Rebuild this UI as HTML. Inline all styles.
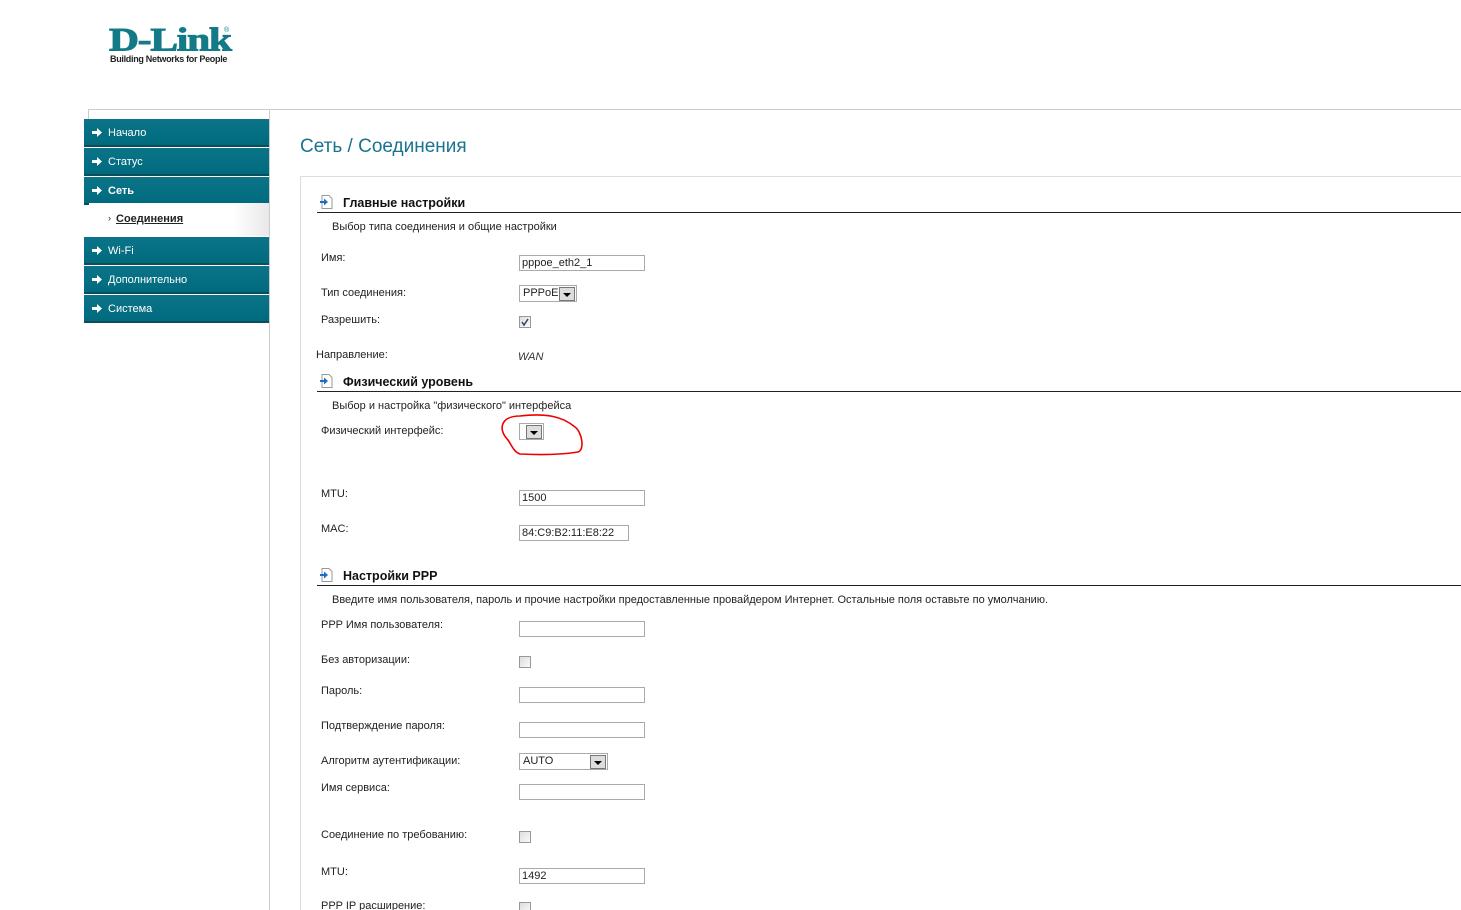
<!DOCTYPE html>
<html style="overflow:hidden"><head><meta charset="utf-8">
<style>
html,body{overflow:hidden}
body{margin:0;width:1461px;height:910px;background:#fff;font-family:"Liberation Sans","DejaVu Sans",sans-serif;font-size:11px;color:#222;position:relative}
.a{position:absolute;white-space:nowrap}
.logo{left:109px;top:25px;font-family:"Liberation Serif",serif;font-weight:bold;font-size:34px;color:#137a87;letter-spacing:-1px;line-height:34px;transform:scale(1.22,0.95);transform-origin:0 0;-webkit-text-stroke:1px #137a87}
.tag{left:110px;top:54px;font-size:9px;font-weight:bold;color:#222;letter-spacing:-0.3px}
.frame{left:88px;top:109px;width:1373px;height:1px;background:#ccc}
.fl{left:88px;top:109px;width:1px;height:30px;background:#ccc}
.sv{left:269px;top:109px;width:1px;height:801px;background:#ccc}
.m{left:84px;width:185px;height:26px;background:linear-gradient(#0b7488,#006a7e);color:#fff;line-height:26px;border-bottom:2px solid #0c4d5a}
.m span{position:absolute;left:24px;top:1px}
.m svg{position:absolute;left:8px;top:9px}
.sub{left:89px;top:203px;width:180px;height:33px;background:linear-gradient(90deg,#fff 80%,#e8e8e8)}
.title{left:300px;top:136px;font-size:19px;color:#1a7390}
.panel{left:300px;top:176px;width:1161px;height:734px;border-left:1px solid #ddd;border-top:1px solid #ddd}
.h{font-weight:bold;font-size:12.5px;color:#111}
.hl{left:317px;width:1144px;height:1px;background:#222}
.in{width:122px;height:14px;border:1px solid #aaa;background:#fff;line-height:14px;padding-left:2px}
.cb{width:10px;height:10px;border:1px solid #999;background:linear-gradient(135deg,#ddd,#fafafa)}
.sel{height:15px;border:1px solid #aaa;background:#fff;line-height:15px;padding-left:3px}
.btn{position:absolute;right:1px;top:1px;width:14px;height:12px;background:#ddd;border:1px solid #777}
.btn:after{content:"";position:absolute;left:3px;top:5px;border-left:4px solid transparent;border-right:4px solid transparent;border-top:4px solid #000}
.t{margin-top:2px}
</style></head><body>
<div class="a logo">D-Link</div>
<div class="a" style="left:224px;top:27px;font-size:7px;color:#137a87">®</div>
<div class="a tag">Building Networks for People</div>
<div class="a frame"></div><div class="a fl"></div><div class="a sv"></div>

<div class="a m" style="top:119px"><svg width="10" height="9"><path d="M0 3h5V0l5 4.5-5 4.5V6H0z" fill="#fff"/></svg><span>Начало</span></div>
<div class="a m" style="top:148px"><svg width="10" height="9"><path d="M0 3h5V0l5 4.5-5 4.5V6H0z" fill="#fff"/></svg><span>Статус</span></div>
<div class="a m" style="top:177px"><svg width="10" height="9"><path d="M0 3h5V0l5 4.5-5 4.5V6H0z" fill="#fff"/></svg><span style="font-weight:bold">Сеть</span></div>
<div class="a sub"></div>
<div class="a" style="left:108px;top:213px;font-size:9px">›</div>
<div class="a" style="left:116px;top:213px;font-weight:bold;text-decoration:underline;color:#222">Соединения</div>
<div class="a m" style="top:237px"><svg width="10" height="9"><path d="M0 3h5V0l5 4.5-5 4.5V6H0z" fill="#fff"/></svg><span>Wi-Fi</span></div>
<div class="a m" style="top:266px"><svg width="10" height="9"><path d="M0 3h5V0l5 4.5-5 4.5V6H0z" fill="#fff"/></svg><span>Дополнительно</span></div>
<div class="a m" style="top:295px"><svg width="10" height="9"><path d="M0 3h5V0l5 4.5-5 4.5V6H0z" fill="#fff"/></svg><span>Система</span></div>

<div class="a title">Сеть / Соединения</div>
<div class="a panel"></div>

<svg class="a" style="left:320px;top:195px" width="13" height="14"><path d="M2 .5h7l3 3v10H2z" fill="#fff" stroke="#999"/><path d="M0 6h4V3.5l4 3.5-4 3.5V8H0z" fill="#1a6fc0"/></svg>
<div class="a h" style="left:343px;top:196px">Главные настройки</div>
<div class="a hl" style="top:212px"></div>
<div class="a" style="left:332px;top:221px">Выбор типа соединения и общие настройки</div>
<div class="a" style="left:321px;top:252px">Имя:</div>
<div class="a in" style="left:519px;top:255px">pppoe_eth2_1</div>
<div class="a" style="left:321px;top:287px">Тип соединения:</div>
<div class="a sel" style="left:519px;top:285px;width:53px">PPPoE<div class="btn"></div></div>
<div class="a" style="left:321px;top:314px">Разрешить:</div>
<div class="a cb" style="left:519px;top:316px"><svg width="10" height="10" style="position:absolute"><path d="M2 5l2 3 4-6" stroke="#345" stroke-width="1.5" fill="none"/></svg></div>
<div class="a" style="left:316px;top:349px">Направление:</div>
<div class="a" style="left:518px;top:351px;font-style:italic;color:#333">WAN</div>

<svg class="a" style="left:320px;top:374px" width="13" height="14"><path d="M2 .5h7l3 3v10H2z" fill="#fff" stroke="#999"/><path d="M0 6h4V3.5l4 3.5-4 3.5V8H0z" fill="#1a6fc0"/></svg>
<div class="a h" style="left:343px;top:375px">Физический уровень</div>
<div class="a hl" style="top:391px"></div>
<div class="a" style="left:332px;top:400px">Выбор и настройка "физического" интерфейса</div>
<div class="a" style="left:321px;top:425px">Физический интерфейс:</div>
<div class="a sel" style="left:519px;top:423px;width:23px;padding-left:0"><div class="btn"></div></div>
<svg class="a" style="left:490px;top:410px" width="100" height="50"><path d="M30 6C10 6 8 20 18 30 22 36 24 42 30 44 50 45 70 45 88 42 95 40 92 22 85 17 72 6 55 3 30 6z" fill="none" stroke="#e00" stroke-width="1.6"/></svg>
<div class="a" style="left:321px;top:488px">MTU:</div>
<div class="a in" style="left:519px;top:490px">1500</div>
<div class="a" style="left:321px;top:523px">MAC:</div>
<div class="a in" style="left:519px;top:525px;width:106px">84:C9:B2:11:E8:22</div>

<svg class="a" style="left:320px;top:568px" width="13" height="14"><path d="M2 .5h7l3 3v10H2z" fill="#fff" stroke="#999"/><path d="M0 6h4V3.5l4 3.5-4 3.5V8H0z" fill="#1a6fc0"/></svg>
<div class="a h" style="left:343px;top:569px">Настройки PPP</div>
<div class="a hl" style="top:585px"></div>
<div class="a" style="left:332px;top:594px">Введите имя пользователя, пароль и прочие настройки предоставленные провайдером Интернет. Остальные поля оставьте по умолчанию.</div>
<div class="a" style="left:321px;top:619px">PPP Имя пользователя:</div>
<div class="a in" style="left:519px;top:621px"></div>
<div class="a" style="left:321px;top:654px">Без авторизации:</div>
<div class="a cb" style="left:519px;top:656px"></div>
<div class="a" style="left:321px;top:685px">Пароль:</div>
<div class="a in" style="left:519px;top:687px"></div>
<div class="a" style="left:321px;top:720px">Подтверждение пароля:</div>
<div class="a in" style="left:519px;top:722px"></div>
<div class="a" style="left:321px;top:755px">Алгоритм аутентификации:</div>
<div class="a sel" style="left:519px;top:753px;width:84px">AUTO<div class="btn"></div></div>
<div class="a" style="left:321px;top:782px">Имя сервиса:</div>
<div class="a in" style="left:519px;top:784px"></div>
<div class="a" style="left:321px;top:829px">Соединение по требованию:</div>
<div class="a cb" style="left:519px;top:831px"></div>
<div class="a" style="left:321px;top:866px">MTU:</div>
<div class="a in" style="left:519px;top:868px">1492</div>
<div class="a" style="left:321px;top:900px">PPP IP расширение:</div>
<div class="a cb" style="left:519px;top:902px"></div>
</body></html>
